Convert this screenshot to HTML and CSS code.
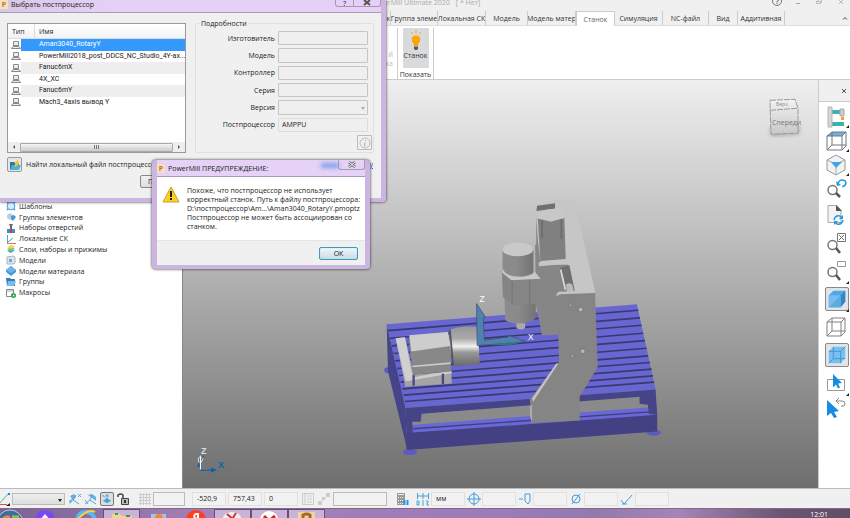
FILE: index.html
```html
<!DOCTYPE html>
<html lang="ru">
<head>
<meta charset="utf-8">
<title>PowerMill Ultimate 2020</title>
<link rel="stylesheet" href="styles.css">
</head>
<body>
<div class="app">
  <header class="titlebar">
    <span class="app-title">PowerMill Ultimate 2020</span><span class="doc-title">[ * Нет]</span>
    <div class="window-controls">
      <button aria-label="Справка"><svg width="12" height="12" viewBox="0 0 12 12"><circle cx="6" cy="1" r="4.500" fill="none" stroke="#777"/><path d="M4.500 0q0-2 1.500-2t1.500 2q0 1-1.500 1.500v1M6 3v1" fill="none" stroke="#666"/></svg></button>
      <button aria-label="Свернуть"><svg width="12" height="12" viewBox="0 0 12 12"><path d="M4 3.500h4" stroke="#aaa"/></svg></button>
      <button aria-label="Развернуть"><svg width="12" height="12" viewBox="0 0 12 12"><path d="M3.500 1.500h4v2h-4zM5 1V-.5h3.500v3H8" fill="none" stroke="#bbb"/></svg></button>
      <button aria-label="Закрыть"><svg width="12" height="12" viewBox="0 0 12 12"><path d="M5 0l4 4M9 0L5 4" stroke="#bbb"/></svg></button>
    </div>
  </header>
  <nav class="tabs">
    <button class="tab tab-lead">к</button>
    <button class="tab w47">Группа элеме</button>
    <button class="tab w48">Локальная СК</button>
    <button class="tab w42">Модель</button>
    <button class="tab w48">Модель матер</button>
    <button class="tab w39 active">Станок</button>
    <button class="tab w48">Симуляция</button>
    <button class="tab w46">NC-файл</button>
    <button class="tab w29">Вид</button>
    <button class="tab w47">Аддитивная</button>
    <button class="collapse" aria-label="Свернуть ленту"><svg width="6" height="4" viewBox="0 0 6 4"><path d="M1 3.500L3 1.500l2 2" fill="none" stroke="#444"/></svg></button>
  </nav>
  <section class="ribbon">
    <div class="ribbon-group lead"><span>й</span><span>ка</span></div>
    <div class="ribbon-group">
      <button class="ribbon-button">
        <svg width="16" height="22" viewBox="0 0 16 22"><path d="M8 1v3M3 3l2 2M13 3l-2 2" stroke="#f8a81c"/><path d="M8 6.500c-3 0-4.300 2-4.300 4.200 0 2.300 2.200 3.200 2.300 6.300h4c.1-3.100 2.300-4 2.300-6.300 0-2.200-1.300-4.200-4.300-4.200z" fill="#f9a602"/><path d="M6 17.500h4v2l-1 1.500H7l-1-1.500z" fill="#54585d"/></svg>
        <span>Станок</span>
      </button>
      <span class="group-label">Показать</span>
    </div>
  </section>

  <main class="workspace">
    <aside class="explorer">
      <ul class="tree">
        <li><svg viewBox="0 0 10 10"><path d="M1 1l2 1 2-1 2 1 2-1-1 2 1 2-1 2 1 2-2-1-2 1-2-1-2 1 1-2-1-2 1-2z" fill="#d6ecfb" stroke="#3998d8"/></svg>Шаблоны</li>
        <li><svg viewBox="0 0 10 10"><path d="M1 3l3-2 3 2v3L4 8 1 6z" fill="#b9cfdf"/><path d="M5 4l3-1 2 2-3 4-2-2z" fill="#4b97cf"/></svg>Группы элементов</li>
        <li><svg viewBox="0 0 10 10"><path d="M1 6h8v4H1z" fill="#3e8ecb"/><path d="M3 1h4L6 3v5H4V3z" fill="#666"/><path d="M4 7h2v3H4z" fill="#e33"/></svg>Наборы отверстий</li>
        <li><svg viewBox="0 0 10 10"><path d="M1.500 1v8" stroke="#4aa3df"/><path d="M1 9.500h9" stroke="#e66"/><path d="M2 8l5-4" stroke="#4a9"/></svg>Локальные СК</li>
        <li><svg viewBox="0 0 10 10"><path d="M1 7l4-2 4 1-4 3z" fill="#4aa3df"/><path d="M1 5l4-2 4 1-4 3z" fill="#7cc36a"/><path d="M1 3l4-2 4 1-4 3z" fill="#f2d64b"/></svg>Слои, наборы и прижимы</li>
        <li><svg viewBox="0 0 10 10"><path d="M1 2l6-1 2 1v6L7 9H1z" fill="#dfe6ea" stroke="#a9b4ba"/><path d="M3 4h3v3H3z" fill="#6ba9d6"/></svg>Модели</li>
        <li><svg viewBox="0 0 10 10"><path d="M5 0l5 4v2l-5 4-5-4V4z" fill="#4398d5"/><path d="M5 0l5 4-5 3-5-3z" fill="#6fb5e6"/></svg>Модели материала</li>
        <li><svg viewBox="0 0 10 10"><path d="M0 1h4l1 1h4v7H1z" fill="#2f7fb8"/><path d="M2 4h8L8 9H1z" fill="#79bdea"/></svg>Группы</li>
        <li class="expandable"><svg viewBox="0 0 10 10"><path d="M.5 1.500h7v7h-7z" fill="#fff" stroke="#888"/><path d="M1 3h6" stroke="#aaa"/><circle cx="7.500" cy="7.500" r="2.500" fill="#2aa84a"/><path d="M7 6.300l1.700 1.200L7 8.700z" fill="#fff"/></svg>Макросы</li>
      </ul>
    </aside>

    <section class="viewport">
      <svg class="scene" viewBox="0 0 636 408">
        <defs>
          <linearGradient id="cyl"><stop offset="0" stop-color="#8c8c8c"/><stop offset=".45" stop-color="#8a8a8a"/><stop offset="1" stop-color="#737373"/></linearGradient>
          <linearGradient id="chuck" x2="0" y2="1"><stop offset="0" stop-color="#969696"/><stop offset=".3" stop-color="#aaa"/><stop offset=".5" stop-color="#f0f0f0"/><stop offset=".65" stop-color="#999"/><stop offset="1" stop-color="#696969"/></linearGradient>
          <linearGradient id="front" x2="0" y2="1"><stop offset="0" stop-color="#f2f2f2"/><stop offset="1" stop-color="#c8c8c8"/></linearGradient>
          <filter id="soft"><feGaussianBlur stdDeviation="2"/></filter>
        </defs>
        <path d="M588 47l30-1-1 8-28 2z" fill="#aaa" filter="url(#soft)"/>
        <path d="M588 20l25-1 3 9v25l-27 1-1-28z" fill="url(#front)" stroke="#999" stroke-dasharray="6 1"/>
        <path d="M588 30l28-2" stroke="#999" stroke-dasharray="6 1"/>
        <text x="594" y="26" class="cube-top">Верх</text>
        <text x="590" y="45" class="cube-front">Спереди</text>

        <g transform="translate(188 105) scale(.3333)">
          <ellipse cx="118" cy="802" rx="21" ry="9" fill="#5c5bc4"/><ellipse cx="851" cy="744" rx="21" ry="9" fill="#5c5bc4"/><ellipse cx="52" cy="556" rx="11" ry="9" fill="#5c5bc4"/>
          <path d="M110 680L630 640 850 610 850 700 110 755z" fill="#8a8a8a"/>
          <path d="M128 720L860 666v26L108 748z" fill="#6a68d4"/><path d="M128 732L860 680" stroke="#403f83" stroke-width="4"/>
          <path d="M48 418L104 660 110 796 95 735 52 560z" fill="#454488"/>
          <path d="M48 418L800 358 856 614 104 670z" fill="#6866d0"/>
          <g stroke="#39396f" stroke-width="5"><path d="M52 437L804 376M58 460L809 399M63 483L814 421M69 506L819 445M74 528L824 467M80 551L829 490M85 572L834 513M90 592L839 533M95 612L844 553M99 631L848 573M103 650L852 592"/></g>
          <path d="M104 670L856 614 861 690 836 688 833 660 808 657 808 636 153 687 150 711 125 711 127 745 108 748z" fill="#454488"/>
          <path d="M106 745L861 690v50L108 796z" fill="#434184"/>
          <path d="M75 460l28-3 26 112 113-9 2 36-140 10z" fill="#a4a4a4"/><path d="M75 460l28-3 24 125-23 4z" fill="#d0d0d0"/><path d="M104 586l139-25" stroke="#ccc" stroke-width="8"/>
          <path d="M116 451l116-10 9 45v74l-113 9-12-91z" fill="#888"/><path d="M116 451l116-10 8 42-118 17z" fill="#cdcdcd"/><path d="M125 545l115-10" stroke="#ccc" stroke-width="5"/><path d="M129 571v32M217 567v31" stroke="#4a4988" stroke-width="7"/>
          <path d="M239 434q35-12 82-8l7 112-77 6q-15-40-12-110z" fill="url(#chuck)"/><path d="M238 434l10 108" stroke="#555" stroke-width="5"/>
          <path d="M318 356l28 42h-8l4 68 72-10-2-5 52 18-50 12v-6l-94 7z" fill="#5182ad" stroke="#314e72" stroke-width="2"/><path d="M340 480l124-11-50 12z" fill="#35747b"/>
          <path d="M498 65q0-15 14-13l98-14 64 281-20 30-85-30-65-80z" fill="#c6c6c6"/>
          <path d="M498 78l2-16 54-8v16zM498 94l7 137-7-5z" fill="#707070"/>
          <path d="M494 180l9-6 9 63 81 2 20 83-50 15v112l-48 3-18-90z" fill="#868686"/>
          <path d="M502 100l40 10 40-12 4 124-76 6z" fill="#808080"/><path d="M500 98l6-15q12-14 65-10l11 26-38 8z" fill="#c8c8c8"/><path d="M515 105v55M573 102v60" stroke="#6c6c6c" stroke-width="5"/>
          <path d="M505 232l88-6 3 10-91 8z" fill="#c5c5c5"/>
          <path d="M569 248l28-8 16 77-25-8z" fill="#707070"/><path d="M571 254l14 60" stroke="#ddd" stroke-width="5"/><path d="M587 298q14-8 19 2l5 20-21 5z" fill="#bbb"/>
          <path d="M396 195q46-30 93 0v72l-10 14h-73l-10-14z" fill="url(#cyl)"/><ellipse cx="442" cy="193" rx="46" ry="21" fill="#c9c9c9"/>
          <path d="M402 340h94v60q-46 30-92 6z" fill="url(#cyl)"/><path d="M438 415h26v14q-13 10-26 0z" fill="#aaa"/>
          <path d="M394 255l33 24 66-15 19 16v77l-85 3-30-24z" fill="#858585"/><path d="M396 250q8 25 55 25 30-2 42-15l18 21-88 5-28-23z" fill="#c7c7c7"/><path d="M425 286v74M478 284v75" stroke="#747474" stroke-width="3"/>
          <path d="M560 333q1-12 16-10l98-4 8 228-54 88v72l-144 8-6-72 88-112z" fill="#858585"/><path d="M558 334q0-16 16-14l100-4v8l-105 4zM558 535l6 1-76 115-3-10z" fill="#c4c4c4"/><path d="M478 665l7-5v54l-6-18z" fill="#aaa"/>
          <g fill="#b9b9b9" stroke="#6a6a6a" stroke-width="2"><circle cx="631" cy="374" r="7"/><circle cx="637" cy="499" r="7"/><circle cx="600" cy="361" r="4"/><circle cx="606" cy="514" r="4"/></g>
          <text x="327" y="350" class="axis">Z</text><text x="473" y="466" class="axis">X</text>
        </g>
        <path d="M17.500 376v14" stroke="#fff"/><path d="M17 390.500h13" stroke="#0b62ac"/><path d="M28 388l6 2-6 3zM14 387l2-5 1 5z" fill="#0b62ac"/><path d="M16 383q-2-6 2-6l2 2-2 4" fill="none" stroke="#ddd"/><path d="M19 379l2-3" stroke="#0b62ac"/>
        <text x="18" y="374" class="triad light">Z</text><text x="35" y="388" class="triad blue">X</text>
      </svg>
    </section>

    <aside class="view-tools">
      <div class="panel-head"><button aria-label="Закрыть панель"><svg width="6" height="6" viewBox="0 0 6 6"><path d="M1 1l4 4M5 1L1 5" stroke="#555"/></svg></button></div>
      <button class="tool more" aria-label="Станок"><svg viewBox="0 0 24 24"><path d="M7 5h9v4H7zM7 17h12v4H7z" fill="#3bb0b4"/><path d="M3 2h4v20H3z" fill="#d4d6d8" stroke="#b5b5b5"/><path d="M15 4h4v7h-4z" fill="#ccc" stroke="#aaa"/><path d="M16 12h3v3h-3z" fill="#f7a416"/></svg></button>
      <button class="tool more" aria-label="Вид сверху"><svg viewBox="0 0 24 24"><path d="M2 7l5-4h14l-4 4z" fill="#6db3e8"/><path d="M2 7h15v14H2zM2 7l5-4h14v14l-4 4M17 7l4-4M7 3v13h14M2 21l5-5" fill="none" stroke="#707880"/></svg></button>
      <button class="tool more" aria-label="Изометрия"><svg viewBox="0 0 24 24"><path d="M11 2l9 5v10l-9 5-9-5V7z" fill="#f1f2f3" stroke="#999"/><path d="M2 7l9 4 9-4M11 11v11" fill="none" stroke="#aaa"/><path d="M6 9h11l-6 6z" fill="#45a2e6"/></svg></button>
      <button class="tool" aria-label="Предыдущий масштаб"><svg viewBox="0 0 24 24"><circle cx="7.500" cy="13" r="4.500" fill="none" stroke="#777" stroke-width="1.500"/><path d="M11 16l4 4" stroke="#555" stroke-width="2.500"/><path d="M13 7q1-4 4-4 4 0 4 3.500-1 3-4 3" fill="none" stroke="#279ae5" stroke-width="1.500"/><path d="M11 4l1 5 4-1z" fill="#279ae5"/></svg></button>
      <button class="tool tall" aria-label="Обновить"><svg viewBox="0 0 24 24"><path d="M3 2.500h9l4 5v12H3z" fill="#f3f3f3" stroke="#aaa"/><path d="M11 2v6h6z" fill="#555"/><path d="M9 17q1-5 6-4l2 2M18 17q-1 5-6 4l-2-2" fill="none" stroke="#279ae5" stroke-width="1.500"/><path d="M18 12v4h-4zM9 22v-4h4z" fill="#279ae5"/></svg></button>
      <button class="tool tall" aria-label="Показать всё"><svg viewBox="0 0 24 24"><circle cx="7.500" cy="14" r="4.500" fill="none" stroke="#777" stroke-width="1.500"/><path d="M11 17l4 5" stroke="#555" stroke-width="2.500"/><path d="M12.500 2.500h8v8h-8zM14 4l5 5M19 4l-5 5" fill="none" stroke="#777"/></svg></button>
      <button class="tool tall more" aria-label="Масштаб рамкой"><svg viewBox="0 0 24 24"><circle cx="7.500" cy="13" r="4.500" fill="none" stroke="#777" stroke-width="1.500"/><path d="M11 16l4 5" stroke="#555" stroke-width="2.500"/><path d="M12.500 2.500h8v5h-8z" fill="#fff" stroke="#999"/></svg></button>
      <button class="tool tall more pressed" aria-label="Закраска"><svg viewBox="0 0 24 24"><path d="M3 8l5-5h13v12l-5 6H3z" fill="#4ea9e8"/><path d="M3 8h13v13H3z" fill="#78bdf0"/><path d="M16 8l5-5v12l-5 6z" fill="#3387c5"/><path d="M3 21L16 8v13z" fill="#5cacdf"/></svg></button>
      <button class="tool tall" aria-label="Каркас"><svg viewBox="0 0 24 24"><path d="M2 7h14v14H2zM2 7l5-4h13v14l-4 4M16 7l4-4M7 3v13h13M2 21l5-5" fill="none" stroke="#808080"/></svg></button>
      <button class="tool tall pressed" aria-label="Прозрачность"><svg viewBox="0 0 24 24"><path d="M3 8l5-5h13v12l-5 6H3z" fill="#75c1f5"/><path d="M3 8h13v13M8 3v13h13M3 21l5-5M16 8l5-5" fill="none" stroke="#4a8fc6"/></svg></button>
      <button class="tool tall more" aria-label="Выбор рамкой"><svg viewBox="0 0 24 24"><path d="M2.500 8.500h17v11h-17z" fill="#fff" stroke="#999"/><path d="M8 3l9 9-4 .5 2 4-2 1-2-4-3 3z" fill="#168de2"/></svg></button>
      <button class="tool" aria-label="Курсор"><svg viewBox="0 0 24 24"><path d="M2 3l12 11-5 1 3 5-3 1-3-5-4 3z" fill="#168de2"/><path d="M12 4h5q3 0 3 3t-4 2M14 1l-3 3 3 3" fill="none" stroke="#888"/></svg></button>
    </aside>
  </main>

  <footer class="statusbar">
    <svg class="lead-icon" viewBox="0 0 12 14"><path d="M0 11L8 2" stroke="#47bd82"/><path d="M0 12.500h7" stroke="#e44"/><path d="M8 1h2v2H8z" fill="#37c"/><path d="M6 14l4-3v3z" fill="#222"/></svg>
    <span class="select-wrap"><select aria-label="Локальная СК"><option></option></select></span>
    <div class="group icons">
      <svg viewBox="0 0 14 14"><path d="M2 4l4-2 2 3-3 3-3 4-1-3 3-2z" fill="#62b0e2"/><path d="M8 3l-3 5 6 4M10 2l3 3M13 2l-3 3" fill="none" stroke="#50a6df"/></svg>
      <svg viewBox="0 0 14 14"><path d="M4 3l4-1 4 3v4L8 6z" fill="#62b0e2"/><path d="M8 3L6 8l-5 4M6 8l6 4M1 8l3 4" fill="none" stroke="#50a6df"/></svg>
      <svg class="on" viewBox="0 0 14 14"><path d="M2 9l5-3 5 3-5 3z" fill="#4aa5e4"/><path d="M7 2v8M2 2l2 3M5 4l2-2 2 2" fill="none" stroke="#3694d9"/></svg>
      <svg viewBox="0 0 14 14"><path d="M5.500 6.500h7v6h-7z" fill="#bbb" stroke="#444"/><path d="M7 6V3q-2-2-5 0v2" fill="none" stroke="#444" stroke-width="1.500"/><path d="M8 8h2v3H8z" fill="#333"/></svg>
    </div>
    <svg class="grid-icon" viewBox="0 0 14 14"><path d="M2.500 1v12M5.500 1v12M8.500 1v12M11.500 1v12M1 2.500h12M1 5.500h12M1 8.500h12M1 11.500h12" stroke="#ccc"/></svg>
    <input class="field w32 outlined" aria-label="Шаг сетки">
    <div class="group coords">
      <input class="field w34" aria-label="X" value="-520,9"><input class="field w34" aria-label="Y" value="757,43"><input class="field w34" aria-label="Z" value="0">
    </div>
    <div class="group icons faded">
      <svg viewBox="0 0 14 14"><path d="M1.500 1.500h11v11h-11zM4 1v12M6 4h5M6 7h5M6 10h5" fill="none" stroke="#ccc"/></svg>
      <svg viewBox="0 0 14 14"><path d="M2 12l9-9" stroke="#ccc"/><path d="M9 1h4v4H9zM1 9h4v4H1zM5 5h3v3H5z" fill="#ccc"/></svg>
    </div>
    <input class="field w54 outlined" aria-label="Команда">
    <svg class="calc" viewBox="0 0 14 14"><path d="M2 1h8v12H2z" fill="#999"/><path d="M3 2.500h6" stroke="#eee"/><path d="M3 5.500h6M3 8.500h6M3 11.500h6" stroke="#eee" stroke-dasharray="1 1"/><path d="M9.500 8v5M12.500 8v5" stroke="#2196e3" stroke-width="2"/></svg>
    <label class="measure"><svg viewBox="0 0 14 14"><path d="M1.500 1v6M7 1v6M12.500 1v6M1 4h12" stroke="#45a1df"/><path d="M1 9h2v4H1zM7 8v6M10 9h2v2h-1v2h2" fill="none" stroke="#45a1df"/></svg><input class="field w34" value="мм"></label>
    <label class="measure"><svg viewBox="0 0 14 14"><circle cx="7" cy="7" r="5" fill="none" stroke="#459bdd"/><path d="M7 0v14M0 7h14" stroke="#459bdd"/></svg><input class="field w34"></label>
    <label class="measure"><svg viewBox="0 0 14 14"><path d="M1 7h4M7 2h5v7l-2 3-3-3z" fill="none" stroke="#459bdd"/></svg><input class="field w34"></label>
    <label class="measure"><svg viewBox="0 0 14 14"><circle cx="7" cy="7" r="4" fill="none" stroke="#459bdd"/><path d="M3 12l8-10" stroke="#459bdd"/></svg><input class="field w34"></label>
    <label class="measure"><svg viewBox="0 0 14 14"><path d="M1 8l3 4 8-9M2 12h5" fill="none" stroke="#459bdd"/></svg><input class="field w34"></label>
  </footer>
  <nav class="taskbar">
    <button class="start" aria-label="Пуск"><svg viewBox="0 0 37 10"><circle cx="18" cy="14" r="13" fill="#3f6c9d" stroke="#b5cbe2"/><path d="M10 9q4-4 8-2v4H9z" fill="#e58a4a"/><path d="M20 6q4 1 7 0v5h-7z" fill="#8cc34c"/></svg></button>
    <button aria-label="Алиса"><svg viewBox="0 0 37 10"><circle cx="16" cy="11" r="10" fill="#7c45f5"/><path d="M16 5l5 6H11z" fill="#fff"/></svg></button>
    <button aria-label="Internet Explorer"><svg viewBox="0 0 37 10"><path d="M11 12q1-10 10-9 7 1 8 9" fill="none" stroke="#55b9f0" stroke-width="4"/><path d="M12 10Q22-1 29 3" fill="none" stroke="#f5d33c" stroke-width="2"/></svg></button>
    <button class="running" aria-label="Проводник"><svg viewBox="0 0 37 10"><path d="M9 4h8l2 2h10v5H9z" fill="#edd889"/><path d="M12 4h3M23 6h4" stroke="#397" stroke-width="2"/></svg></button>
    <button aria-label="Изображения"><svg viewBox="0 0 37 10"><path d="M11 5h15v6H11z" fill="#9cc7ea"/><circle cx="19" cy="9" r="4" fill="#ee8b30"/></svg></button>
    <button aria-label="Яндекс"><svg viewBox="0 0 37 10"><circle cx="19" cy="11" r="10" fill="#fc3f1d"/><path d="M21 11V5h-2q-3 1-1 4l2 1" fill="none" stroke="#fff" stroke-width="2"/></svg></button>
    <button class="running" aria-label="Ножницы"><svg viewBox="0 0 37 10"><ellipse cx="18" cy="8" rx="9" ry="6" fill="#eee"/><path d="M13 4l8 7M22 3l-5 8" stroke="#c34" stroke-width="2"/></svg></button>
    <button class="running" aria-label="Браузер"><svg viewBox="0 0 37 10"><circle cx="18" cy="10" r="9" fill="#fff"/><path d="M13 6l5 5 6-5" fill="none" stroke="#d22" stroke-width="3"/></svg></button>
    <button class="running" aria-label="PowerMill"><svg viewBox="0 0 37 10"><path d="M10 2h17v9H10z" fill="#f1d3a7"/><path d="M15 11V5q4-2 7 0v4" fill="none" stroke="#a36b2a" stroke-width="3"/></svg></button>
    <time>12:01</time>
  </nav>
</div>

<section class="dialog post-dialog" aria-label="Выбрать постпроцессор">
  <header class="post-title"><span class="p-icon">P</span>Выбрать постпроцессор
    <div class="caption-buttons"><button aria-label="Справка">?</button><button aria-label="Закрыть"><svg width="8" height="6" viewBox="0 0 8 6"><path d="M1 0l6 5M7 0L1 5" stroke="#555" stroke-width="2"/></svg></button></div>
  </header>
  <div class="post-body">
    <div class="post-list">
      <table>
        <thead><tr><th class="type">Тип</th><th>Имя</th></tr></thead>
        <tbody>
          <tr class="selected"><td class="type"><svg viewBox="0 0 10 8"><path d="M2.500.5h5v4h-5zM2 5.500L.5 7.500h9L8 5.500z" fill="#eee" stroke="#888"/></svg></td><td>Aman3040_RotaryY</td></tr>
          <tr><td class="type"><svg viewBox="0 0 10 8"><path d="M2.500.5h5v4h-5zM2 5.500L.5 7.500h9L8 5.500z" fill="#eee" stroke="#888"/></svg></td><td>PowerMill2018_post_DDCS_NC_Studio_4Y-ax...</td></tr>
          <tr class="stripe"><td class="type"><svg viewBox="0 0 10 8"><path d="M2.500.5h5v4h-5zM2 5.500L.5 7.500h9L8 5.500z" fill="#eee" stroke="#888"/></svg></td><td>Fanuc6mX</td></tr>
          <tr><td class="type"><svg viewBox="0 0 10 8"><path d="M2.500.5h5v4h-5zM2 5.500L.5 7.500h9L8 5.500z" fill="#eee" stroke="#888"/></svg></td><td>4X_XC</td></tr>
          <tr class="stripe"><td class="type"><svg viewBox="0 0 10 8"><path d="M2.500.5h5v4h-5zM2 5.500L.5 7.500h9L8 5.500z" fill="#eee" stroke="#888"/></svg></td><td>Fanuc6mY</td></tr>
          <tr><td class="type"><svg viewBox="0 0 10 8"><path d="M2.500.5h5v4h-5zM2 5.500L.5 7.500h9L8 5.500z" fill="#eee" stroke="#888"/></svg></td><td>Mach3_4axis вывод Y</td></tr>
        </tbody>
      </table>
      <div class="scrollbar"><svg width="4" height="6" viewBox="0 0 4 6"><path d="M3 1L1 3l2 2z" fill="#555"/></svg><span class="thumb"><svg width="6" height="4" viewBox="0 0 6 4"><path d="M.5 0v4M2.500 0v4M4.500 0v4" stroke="#777"/></svg></span><svg width="4" height="6" viewBox="0 0 4 6"><path d="M1 1l2 2-2 2z" fill="#555"/></svg></div>
    </div>
    <fieldset class="details">
      <legend>Подробности</legend>
      <div class="detail-grid">
        <label for="maker">Изготовитель</label><input id="maker">
        <label for="model">Модель</label><input id="model">
        <label for="controller">Контроллер</label><input id="controller">
        <label for="series">Серия</label><input id="series">
        <label for="version">Версия</label><span class="select-wrap faint"><select id="version"><option></option></select></span>
        <label for="post">Постпроцессор</label><input id="post" value="AMPPU">
      </div>
      <button class="info" aria-label="Сведения"><svg width="12" height="12" viewBox="0 0 12 12"><circle cx="6" cy="6" r="5" fill="#eee" stroke="#bbb"/><path d="M6.500 3v1M6 5.500L5.500 9h1" fill="none" stroke="#aaa"/></svg></button>
    </fieldset>
  </div>
  <div class="post-find">
    <button class="open" aria-label="Открыть файл"><svg width="12" height="12" viewBox="0 0 12 12"><path d="M1 3h4l1 1h4v7H1z" fill="#2c759c"/><path d="M3 6h9l-2 5H1z" fill="#4bb1dc"/><path d="M6 3l3-2 1 4-4 3z" fill="#f3c43d"/></svg></button>
    <span>Найти локальный файл постпроцессо</span>
    <a href="#">у</a>
  </div>
  <div class="post-actions"><button>П</button></div>
</section>

<section class="dialog warning" role="alertdialog" aria-label="PowerMill ПРЕДУПРЕЖДЕНИЕ">
  <header class="warn-title"><span class="p-icon">P</span>PowerMill ПРЕДУПРЕЖДЕНИЕ:
    <span class="glow"></span>
    <button class="warn-close" aria-label="Закрыть"><svg width="8" height="7" viewBox="0 0 8 7"><path d="M1 1l6 5M7 1L1 6" stroke="#666" stroke-width="2.500"/><path d="M1 1l6 5M7 1L1 6" stroke="#fff"/></svg></button>
  </header>
  <div class="warn-message">
    <svg width="18" height="17" viewBox="0 0 18 17"><path d="M9 1l8 15H1z" fill="#fbd122" stroke="#c9a02e" stroke-linejoin="round"/><path d="M9 5v6M9 12v2" stroke="#222" stroke-width="2"/></svg>
    <p>Похоже, что постпроцессор не использует<br>корректный станок. Путь к файлу постпроцессора:<br>D:\постпроцессор\Am...\Aman3040_RotaryY.pmoptz<br>Постпроцессор не может быть ассоциирован со<br>станком.</p>
  </div>
  <div class="warn-footer"><button>OK</button></div>
</section>
</body>
</html>
```
FILE: styles.css
```css
* { box-sizing: border-box; }
body {
  margin: 0;
  overflow: hidden;
  font: 7px/9px "Open Sans", "Noto Sans", sans-serif;
  color: #222;
}
button, input, select { font: inherit; color: inherit; margin: 0; padding: 0; border: 0; background: none; border-radius: 0; min-width: 0; }
button { display: flex; align-items: center; justify-content: center; }
select { appearance: none; }
svg { display: block; flex: none; }
.app { display: flex; flex-direction: column; height: 100vh; background: #f0f0f0; }

.titlebar { display: flex; height: 11px; padding: 0 4px 0 370px; color: #aaa; line-height: 6px; }
.doc-title { margin-left: 6px; }
.window-controls { display: flex; gap: 9px; margin-left: auto; height: 11px; overflow: hidden; }
.window-controls button { align-items: flex-start; }
.window-controls svg { overflow: visible; }

.tabs { display: flex; height: 15px; border-bottom: 1px solid #ddd; }
.tab { border-right: 1px solid #ccc; overflow: hidden; white-space: nowrap; color: #333; }
.tab-lead { width: 391px; justify-content: flex-end; }
.tab.active { height: 15px; background: #fff; border: 1px solid #ccc; border-bottom: 0; color: #666; }
.w29 { width: 29px; } .w39 { width: 39px; } .w42 { width: 42px; }
.w46 { width: 46px; } .w47 { width: 47px; } .w48 { width: 48px; }
.collapse { margin-left: auto; padding: 0 2px; }

.ribbon { display: flex; height: 54px; padding-top: 2px; background: #fff; border-bottom: 1px solid #ccc; }
.ribbon-group { display: flex; flex-direction: column; align-items: center; justify-content: space-between; width: 36px; height: 51px; border-right: 1px solid #ccc; color: #333; }
.ribbon-group.lead { width: 398px; align-items: flex-end; justify-content: flex-start; padding: 22px 4px 0; color: #bbb; }
.ribbon-button { flex-direction: column; justify-content: flex-start; width: 26px; height: 40px; padding-top: 1px; background: #d8dadc; }

.workspace { display: flex; flex: 1; min-height: 0; }
.explorer { width: 182px; padding-top: 121px; background: #fff; }
.tree { display: grid; grid-auto-rows: 1fr; align-items: center; height: 97px; margin: 0; padding: 0 0 0 6px; list-style: none; }
.tree li { display: flex; align-items: center; gap: 3px; white-space: nowrap; }
.tree svg { width: 10px; height: 10px; }
.viewport { flex: 1; min-width: 0; background: linear-gradient(#efefef, #6e6e6e); border-left: 1px solid #888; }
.scene { width: 100%; height: 100%; }
.cube-top { font-size: 5px; fill: #888; }
.cube-front { font-size: 7px; fill: #777; }
.axis { font: 25px "Liberation Sans", sans-serif; fill: #fff; }
.triad { font: bold 9px "Liberation Sans", sans-serif; }
.light { fill: #ddd; }
.blue { fill: #0b62ac; }

.view-tools { width: 32px; background: #fff; border-left: 1px solid #ccc; }
.panel-head { display: flex; align-items: center; justify-content: flex-end; height: 22px; margin-bottom: 3px; padding-right: 3px; background: #f0f0f0; border-bottom: 1px solid #ccc; }
.tool { position: relative; width: 26px; height: 24px; margin-left: 5px; }
.tool svg { width: 24px; height: 24px; }
.tool.tall { height: 28px; }
.tool.more::after { content: ""; position: absolute; right: 1px; bottom: 1px; border-left: 3px solid transparent; border-bottom: 3px solid #222; }
.tool.pressed svg { background: #e2e5e8; border: 1px solid #888; border-radius: 2px; }

.select-wrap { position: relative; display: flex; }
.select-wrap::after { content: ""; position: absolute; right: 3px; top: 50%; border: 2px solid transparent; border-top: 3px solid #222; border-bottom: 0; pointer-events: none; }
.select-wrap.faint::after { border-top-color: #aaa; }
.select-wrap select { flex: 1; }

.statusbar { display: flex; align-items: center; height: 20px; border-top: 1px solid #bbb; overflow: hidden; }
.statusbar svg { width: 14px; height: 14px; }
.statusbar .lead-icon { width: 12px; }
.statusbar .select-wrap { width: 53px; }
.statusbar select { height: 12px; border: 1px solid #bbb; background: linear-gradient(#eee, #ddd); }
.group { display: flex; align-items: center; }
.icons { gap: 2px; margin-left: 3px; }
.icons .on { border: 1px solid #777; border-radius: 2px; background: #ddd; }
.grid-icon { margin: 0 1px 0 8px; }
.field { height: 14px; padding: 0 4px; border: 1px solid #e0e0e0; background: #f2f2f2; }
.field.outlined { border-color: #bbb; }
.w32 { width: 32px; } .w34 { width: 34px; } .w54 { width: 54px; }
.coords { gap: 2px; margin-left: 7px; }
.coords + .icons { margin: 0 2px 0 3px; }
.calc { margin: 0 7px 0 8px; }
.measure { display: flex; align-items: center; gap: 1px; margin-right: 2px; }

.taskbar { display: flex; height: 10px; overflow: hidden; background: linear-gradient(90deg, #796393, #a780b8 25%, #9c7bb8 60%, #9479ae 70%, #a684b5 80%, #6a5572 92%, #604e68); border-top: 1px solid #7d6a8c; }
.taskbar button { width: 37px; height: 10px; align-items: flex-start; }
.taskbar svg { width: 37px; height: 10px; }
.taskbar .start { width: 29px; justify-content: flex-end; }
.taskbar .running { background: #cbb3d5; border: 1px solid #67507c; }
.taskbar time { margin: 1px 22px 0 auto; color: #fff; }

.dialog { position: absolute; background: #f0f0f0; border: solid #cdb5e2; box-shadow: 0 0 3px #222; }
.p-icon { display: flex; align-items: center; justify-content: center; width: 8px; height: 9px; margin-right: 3px; background: #f6e0c3; color: #c27420; font-weight: 700; }
.post-dialog { top: 0; left: 0; width: 386px; height: 202px; border-width: 0 5px 4px 0; border-radius: 0 0 4px 0; }
.post-title { display: flex; height: 13px; line-height: 9px; background: linear-gradient(90deg, #d9c7e6, #e6d0f8 30%, #e6d0f8); border-bottom: 1px solid #a99bb5; }
.caption-buttons { display: flex; height: 7px; margin-left: auto; border: 1px solid #a899b3; border-top: 0; border-radius: 0 0 3px 3px; }
.caption-buttons button { width: 17px; height: 6px; line-height: 5px; }
.caption-buttons button + button { width: 27px; border-left: 1px solid #a899b3; }
.post-body { display: flex; gap: 9px; padding: 10px 7px 0; }
.post-list { display: flex; flex-direction: column; justify-content: space-between; width: 179px; height: 130px; background: #fff; border: 1px solid #999; }
.post-list table { width: 100%; height: 84px; border-spacing: 0; table-layout: fixed; }
.post-list th { height: 15px; padding: 0 4px; text-align: left; font-weight: 400; background: linear-gradient(#fff, #f1f2f4); border-bottom: 1px solid #ddd; }
.post-list td { padding: 0 0 0 4px; white-space: nowrap; font-family: Roboto, "Open Sans", sans-serif; line-height: 9px; }
.post-list .type { width: 27px; }
.post-list th.type { border-right: 1px solid #ddd; }
.post-list td.type { padding-left: 3px; }
.post-list td svg { width: 10px; height: 8px; }
.selected { background: linear-gradient(90deg, #fff 13px, #3399ff 13px); color: #fff; }
.stripe { background: linear-gradient(90deg, #fff 13px, #eee 13px); }
.scrollbar { display: flex; align-items: center; justify-content: space-between; height: 10px; padding: 0 4px; background: #eee; }
.thumb { display: flex; align-items: center; justify-content: center; width: 153px; height: 9px; background: linear-gradient(#f5f5f5, #ccc); border: 1px solid #aaa; border-radius: 1px; }
.details { position: relative; flex: 1; min-width: 0; height: 130px; margin: 0; padding: 7px 5px 0; border: 1px solid #dde1e6; border-radius: 2px; }
.details legend { position: absolute; top: -5px; left: 4px; padding: 0 1px; background: #f0f0f0; }
.detail-grid { display: grid; grid-template-columns: 1fr 90px; grid-auto-rows: 1fr; gap: 3px; height: 101px; }
.detail-grid label { display: flex; align-items: center; justify-content: flex-end; }
.detail-grid input, .detail-grid select { height: 100%; padding: 0 3px; border: 1px solid #c5c5c5; border-radius: 1px; background: #efefef; }
#post { border-color: #ddd; }
.info { width: 15px; height: 15px; margin: 3px -4px 0 auto; border: 1px solid #bbb; border-radius: 1px; }
.post-find { display: flex; align-items: center; gap: 4px; margin: 4px 8px 0 7px; }
.post-find span { width: 127px; overflow: hidden; white-space: nowrap; }
.open { width: 15px; height: 15px; border: 1px solid #999; border-radius: 2px; background: #e6e6e6; }
.post-find a { margin-left: auto; color: #16c; }
.post-actions { padding: 3px 0 0 140px; }
.post-actions button { width: 50px; height: 13px; padding-left: 7px; justify-content: flex-start; border: 1px solid #888; border-radius: 2px; background: linear-gradient(#f3f3f3, #ddd); }

.warning { top: 160px; left: 152px; width: 218px; height: 109px; border-width: 0 5px 4px; border-radius: 4px; display: flex; flex-direction: column; background: #e6d2f7; }
.warn-title { position: relative; display: flex; align-items: center; height: 17px; border-bottom: 1px solid #a99bb5; white-space: nowrap; }
.glow { position: absolute; right: 26px; top: 3px; width: 18px; height: 5px; background: #7ba1e6; filter: blur(2px); }
.warn-close { width: 27px; height: 10px; margin: 0 0 auto auto; border: 1px solid #a899b3; border-top: 0; border-radius: 0 0 3px 3px; }
.warn-message { display: flex; gap: 7px; flex: 1; padding: 9px 0 0 5px; background: #fff; }
.warn-message p { margin: 0; white-space: nowrap; }
.warn-footer { display: flex; align-items: center; justify-content: flex-end; height: 25px; padding-right: 7px; background: #f0f0f0; border-top: 1px solid #e5e5e5; }
.warn-footer button { width: 39px; height: 13px; border: 1px solid #3c9ac4; border-radius: 2px; background: linear-gradient(#eef6fa, #ccdce4); box-shadow: inset 0 0 1px #6cd0f2; }
```
